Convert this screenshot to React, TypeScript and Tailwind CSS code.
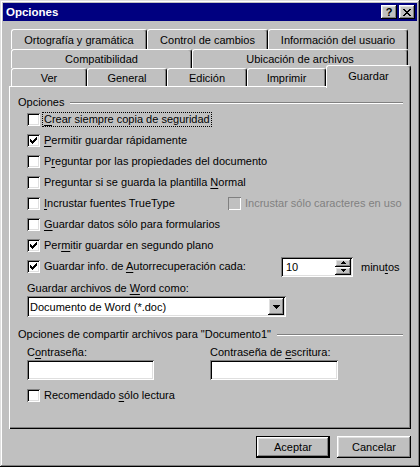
import type { ReactNode } from "react";

const RAISED =
  "shadow-[inset_-1px_-1px_#000,inset_1px_1px_#fff,inset_-2px_-2px_#808080,inset_2px_2px_#dfdfdf]";
const SUNKEN =
  "shadow-[inset_1px_1px_#808080,inset_-1px_-1px_#fff,inset_2px_2px_#000,inset_-2px_-2px_#dfdfdf]";

const CHECK = ["......#", ".....##", "#...###", "##.###.", "#####..", ".###...", "..#...."];
const CLOSE = ["##....##", ".##..##.", "..####..", "...##...", "..####..", ".##..##.", "##....##"];
const DOWN = ["#######", ".#####.", "..###..", "...#..."];
const SPIN_UP = ["..#..", ".###.", "#####"];
const SPIN_DOWN = ["#####", ".###.", "..#.."];

function Pixels({ rows, className }: { rows: string[]; className?: string }) {
  return (
    <svg width={rows[0].length} height={rows.length} className={className} shapeRendering="crispEdges">
      {rows.flatMap((row, y) =>
        row
          .split("")
          .map((c, x) =>
            c === "#" ? <rect key={`${x}-${y}`} x={x} y={y} width={1} height={1} fill="currentColor" /> : null,
          ),
      )}
    </svg>
  );
}

// underlined access key
function U({ children }: { children: ReactNode }) {
  return <span className="underline underline-offset-[2px]">{children}</span>;
}

function Box({ checked, disabled }: { checked?: boolean; disabled?: boolean }) {
  return (
    <span
      className={[
        "flex h-[13px] w-[13px] shrink-0 items-center justify-center",
        disabled ? "bg-[#c0c0c0] shadow-[inset_1px_1px_#808080,inset_-1px_-1px_#fff]" : "bg-white " + SUNKEN,
      ].join(" ")}
    >
      {checked && <Pixels rows={CHECK} className="text-black" />}
    </span>
  );
}

function Check({
  checked,
  focused,
  disabled,
  children,
}: {
  checked?: boolean;
  focused?: boolean;
  disabled?: boolean;
  children: ReactNode;
}) {
  return (
    <div className="flex items-center">
      <Box checked={checked} disabled={disabled} />
      <span
        className={[
          "whitespace-nowrap leading-[13px]",
          focused ? "ml-[2px] border border-dotted border-black px-px" : "ml-[4px]",
          disabled ? "text-[#808080]" : "",
        ].join(" ")}
      >
        {children}
      </span>
    </div>
  );
}

function GroupHeader({ children }: { children: ReactNode }) {
  return (
    <div className="flex h-[14px] items-center gap-[6px]">
      <span className="whitespace-nowrap">{children}</span>
      <div className="mt-px h-[2px] flex-1 border-t border-b border-t-[#808080] border-b-white" />
    </div>
  );
}

const ROW1 = [
  { label: "Ortografía y gramática", w: "w-[136px]" },
  { label: "Control de cambios", w: "w-[121px]" },
  { label: "Información del usuario", w: "w-[140px]" },
];
const ROW2 = [
  { label: "Compatibilidad", w: "w-[181px]" },
  { label: "Ubicación de archivos", w: "w-[216px]" },
];
const ROW3 = [
  { label: "Ver", w: "w-[76px]" },
  { label: "General", w: "w-[80px]" },
  { label: "Edición", w: "w-[80px]" },
  { label: "Imprimir", w: "w-[79px]" },
];

function Tab({ label, w }: { label: string; w: string }) {
  return (
    <div
      className={`${w} flex h-full items-center justify-center rounded-t-[3px] border-t border-r border-l border-t-white border-r-black border-l-white bg-[#c0c0c0] shadow-[inset_-1px_0_#808080]`}
    >
      {label}
    </div>
  );
}

export default function App() {
  return (
    <div className="h-[467px] w-[420px] bg-[#c0c0c0] p-[3px] font-['Liberation_Sans',Arial,sans-serif] text-[11px] leading-[14px] text-black shadow-[inset_-1px_-1px_#000,inset_1px_1px_#dfdfdf,inset_-2px_-2px_#808080,inset_2px_2px_#fff]">
      {/* title bar */}
      <div className="flex h-[18px] items-center bg-[#000080] pr-[2px] pl-[3px]">
        <span className="flex-1 text-[11.5px] font-bold text-white">Opciones</span>
        <div className="flex gap-[2px]">
          <div className={`flex h-[14px] w-[16px] items-center justify-center bg-[#c0c0c0] pb-px text-[11px] font-bold ${RAISED}`}>
            ?
          </div>
          <div className={`flex h-[14px] w-[16px] items-center justify-center bg-[#c0c0c0] ${RAISED}`}>
            <Pixels rows={CLOSE} className="text-black" />
          </div>
        </div>
      </div>

      {/* tabs */}
      <div className="mx-[6px] mt-[8px]">
        <div className="flex h-[20px] pl-[2px]">
          {ROW1.map((t) => (
            <Tab key={t.label} {...t} />
          ))}
        </div>
        <div className="flex h-[19px] pl-[2px]">
          {ROW2.map((t) => (
            <Tab key={t.label} {...t} />
          ))}
        </div>
        <div className="flex h-[18px] items-end pl-[2px]">
          {ROW3.map((t) => (
            <Tab key={t.label} {...t} />
          ))}
          <div className="relative z-10 -mb-[2px] flex h-[23px] w-[85px] items-center justify-center rounded-t-[3px] border-t border-r border-l border-t-white border-r-black border-l-white bg-[#c0c0c0] pb-[2px] shadow-[inset_-1px_0_#808080]">
            Guardar
          </div>
        </div>

        {/* panel */}
        <div className="h-[343px] pt-[9px] pr-[8px] pl-[9px] shadow-[inset_1px_1px_#fff,inset_-1px_-1px_#000,inset_-2px_-2px_#808080]">
          <GroupHeader>Opciones</GroupHeader>

          <div className="ml-[9px] flex flex-col [&>div]:h-[21px]">
            <div className="flex items-center">
              <Check focused>
                <U>C</U>rear siempre copia de seguridad
              </Check>
            </div>
            <div className="flex items-center">
              <Check checked>
                <U>P</U>ermitir guardar rápidamente
              </Check>
            </div>
            <div className="flex items-center">
              <Check>
                P<U>r</U>eguntar por las propiedades del documento
              </Check>
            </div>
            <div className="flex items-center">
              <Check>
                Preguntar si se guarda la plantilla <U>N</U>ormal
              </Check>
            </div>
            <div className="flex items-center">
              <div className="w-[201px]">
                <Check>
                  <U>I</U>ncrustar fuentes TrueType
                </Check>
              </div>
              <Check disabled>Incrustar sólo caracteres en uso</Check>
            </div>
            <div className="flex items-center">
              <Check>
                <U>G</U>uardar datos sólo para formularios
              </Check>
            </div>
            <div className="flex items-center">
              <Check checked>
                Per<U>m</U>itir guardar en segundo plano
              </Check>
            </div>
            <div className="flex items-center">
              <div className="w-[254px]">
                <Check checked>
                  Guardar info. de <U>A</U>utorrecuperación cada:
                </Check>
              </div>
              <div className={`flex h-[20px] w-[72px] items-center bg-white p-[2px] ${SUNKEN}`}>
                <span className="flex-1 pl-[3px] text-[11px]">10</span>
                <div className="flex h-[16px] w-[16px] flex-col">
                  <div className={`flex h-[8px] items-center justify-center bg-[#c0c0c0] ${RAISED}`}>
                    <Pixels rows={SPIN_UP} className="text-black" />
                  </div>
                  <div className={`flex h-[8px] items-center justify-center bg-[#c0c0c0] ${RAISED}`}>
                    <Pixels rows={SPIN_DOWN} className="text-black" />
                  </div>
                </div>
              </div>
              <span className="ml-[8px]">
                minu<U>t</U>os
              </span>
            </div>
          </div>

          <div className="mt-[4px] ml-[9px] h-[14px]">
            Guardar archivos de <U>W</U>ord como:
          </div>
          <div className={`mt-px ml-[9px] flex h-[21px] w-[259px] items-center bg-white p-[2px] ${SUNKEN}`}>
            <span className="flex-1 pl-px">Documento de Word (*.doc)</span>
            <div className={`flex h-[17px] w-[16px] items-center justify-center bg-[#c0c0c0] ${RAISED}`}>
              <Pixels rows={DOWN} className="text-black" />
            </div>
          </div>

          <div className="mt-[10px]">
            <GroupHeader>Opciones de compartir archivos para "Documento1"</GroupHeader>
          </div>

          <div className="mt-[5px] ml-[9px] flex">
            <div className="w-[183px]">
              <div className="h-[13px] leading-[13px]">
                C<U>o</U>ntraseña:
              </div>
              <div className={`mt-px h-[20px] w-[127px] bg-white ${SUNKEN}`} />
            </div>
            <div>
              <div className="h-[13px] leading-[13px]">
                Contraseña de <U>e</U>scritura:
              </div>
              <div className={`mt-px h-[20px] w-[128px] bg-white ${SUNKEN}`} />
            </div>
          </div>

          <div className="mt-[5px] ml-[9px] flex h-[21px] items-center">
            <Check>
              Recomendado <U>s</U>ólo lectura
            </Check>
          </div>
        </div>
      </div>

      {/* buttons */}
      <div className="mt-[7px] flex justify-end gap-[7px] pr-[6px]">
        <div className="flex h-[22px] w-[74px] border border-black">
          <div className={`flex flex-1 items-center justify-center bg-[#c0c0c0] ${RAISED}`}>Aceptar</div>
        </div>
        <div className={`flex h-[22px] w-[74px] items-center justify-center bg-[#c0c0c0] ${RAISED}`}>Cancelar</div>
      </div>
    </div>
  );
}
